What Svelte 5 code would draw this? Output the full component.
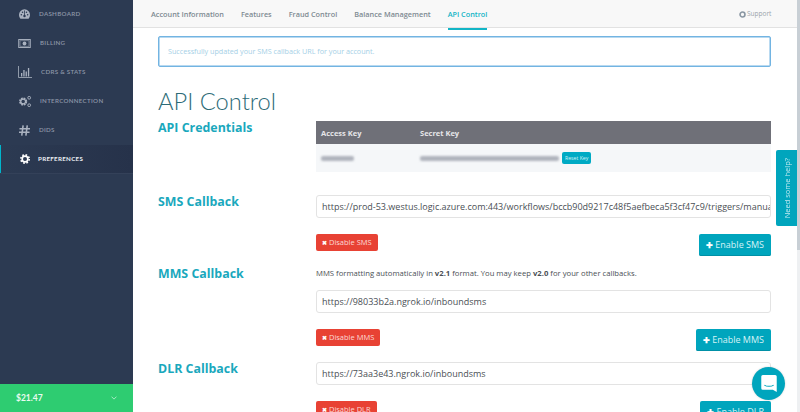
<script>
  const nav = [
    { label: 'DASHBOARD', icon: 'dash', pad: 39 },
    { label: 'BILLING', icon: 'bill', pad: 40 },
    { label: 'CDRS & STATS', icon: 'stats', pad: 41 },
    { label: 'INTERCONNECTION', icon: 'inter', pad: 40 },
    { label: 'DIDS', icon: 'hash', pad: 39 },
    { label: 'PREFERENCES', icon: 'gear', pad: 38, active: true }
  ];
  const tabs = ['Account Information', 'Features', 'Fraud Control', 'Balance Management', 'API Control'];
</script>

<div class="page">
  <aside class="side">
    <nav class="nav">
      {#each nav as n}
        <div class="item" class:active={n.active}>
          <span class="ico">
            {#if n.icon === 'dash'}
              <svg viewBox="0 0 14 12" width="11" height="10"><path fill="#aab2c0" d="M7 0a7 7 0 0 0-7 7c0 2 .7 3.600 1.800 5h10.400A7 7 0 0 0 14 7a7 7 0 0 0-7-7z"/><g fill="#2c3a52"><circle cx="3" cy="7" r="1"/><circle cx="4.500" cy="3.700" r="1"/><circle cx="9.500" cy="3.700" r="1"/><circle cx="11" cy="7" r="1"/><circle cx="7" cy="8.500" r="1.600"/><rect x="6.500" y="1.500" width="1" height="6"/></g></svg>
            {:else if n.icon === 'bill'}
              <svg viewBox="0 0 14 10" width="13" height="9"><rect x=".6" y=".6" width="12.800" height="8.800" fill="none" stroke="#aab2c0" stroke-width="1.100"/><rect x="2" y="2" width="10" height="6" fill="none" stroke="#aab2c0" stroke-width=".6"/><circle cx="7" cy="5" r="2.100" fill="#aab2c0"/></svg>
            {:else if n.icon === 'stats'}
              <svg viewBox="0 0 14 12" width="14" height="12"><path fill="none" stroke="#aab2c0" stroke-width=".8" d="M.5 0v11.500H14"/><g fill="#aab2c0"><rect x="3" y="7" width="1.300" height="3.500"/><rect x="5.300" y="4" width="1.300" height="6.500"/><rect x="7.600" y="5.500" width="1.300" height="5"/><rect x="9.900" y="2" width="1.300" height="8.500"/></g></svg>
            {:else if n.icon === 'inter'}
              <svg viewBox="0 0 15 14" width="14" height="13"><circle cx="5.500" cy="7" r="3.300" fill="none" stroke="#aab2c0" stroke-width="2.200" stroke-dasharray="1.800 .8"/><circle cx="5.500" cy="7" r="2.600" fill="none" stroke="#aab2c0" stroke-width="1.300"/><circle cx="12" cy="3" r="1.500" fill="none" stroke="#aab2c0"/><circle cx="12" cy="11" r="1.500" fill="none" stroke="#aab2c0"/></svg>
            {:else if n.icon === 'hash'}
              <svg viewBox="0 0 12 12" width="11" height="11"><path fill="none" stroke="#aab2c0" stroke-width="1.700" d="M4.500 .5 3 11.500M9 .5 7.500 11.500M.5 4H12M0 8h11.500"/></svg>
            {:else}
              <svg viewBox="0 0 12 12" width="10" height="10"><circle cx="6" cy="6" r="3.400" fill="none" stroke="#fff" stroke-width="2"/><circle cx="6" cy="6" r="5" fill="none" stroke="#fff" stroke-width="2" stroke-dasharray="2 1.930"/></svg>
            {/if}
          </span>
          <span class="lbl" style="left:{n.pad}px">{n.label}</span>
        </div>
      {/each}
    </nav>
    <div class="balance">
      <span>$21.47</span>
      <svg viewBox="0 0 8 5" width="6" height="4"><path d="M.7.7 4 4 7.300.7" fill="none" stroke="#cdf3dc" stroke-width="1"/></svg>
    </div>
  </aside>

  <main class="main">
    <header class="tabs">
      {#each tabs as t, i}
        <span class="tab" class:on={i === 4}>{t}</span>
      {/each}
      <span class="support">
        <svg viewBox="0 0 12 12" width="7" height="7"><circle cx="6" cy="6" r="4.200" fill="none" stroke="#8a97a3" stroke-width="2.800"/></svg>
        Support
      </span>
    </header>

    <div class="content">
      <div class="alert">Successfully updated your SMS callback URL for your account.</div>
      <h1>API Control</h1>

      <section class="row creds">
        <h2>API Credentials</h2>
        <div class="col">
          <div class="thead"><span class="c1">Access Key</span><span>Secret Key</span></div>
          <div class="tbody">
            <span class="c1"><i class="blur b1"></i></span>
            <i class="blur b2"></i>
            <span class="reset">Reset Key</span>
          </div>
        </div>
      </section>

      <section class="row sms">
        <h2>SMS Callback</h2>
        <div class="col">
          <div class="input">https://prod-53.westus.logic.azure.com:443/workflows/bccb90d9217c48f5aefbeca5f3cf47c9/triggers/manual/paths/invoke</div>
          <div class="btns">
            <span class="btn red"><b>✖</b> Disable SMS</span>
            <span class="btn teal"><b>✚</b> Enable SMS</span>
          </div>
        </div>
      </section>

      <section class="row mms">
        <h2>MMS Callback</h2>
        <div class="col">
          <p class="note">MMS formatting automatically in <b>v2.1</b> format. You may keep <b>v2.0</b> for your other callbacks.</p>
          <div class="input">https://98033b2a.ngrok.io/inboundsms</div>
          <div class="btns">
            <span class="btn red"><b>✖</b> Disable MMS</span>
            <span class="btn teal"><b>✚</b> Enable MMS</span>
          </div>
        </div>
      </section>

      <section class="row dlr">
        <h2>DLR Callback</h2>
        <div class="col">
          <div class="input">https://73aa3e43.ngrok.io/inboundsms</div>
          <div class="btns">
            <span class="btn red"><b>✖</b> Disable DLR</span>
            <span class="btn teal"><b>✚</b> Enable DLR</span>
          </div>
        </div>
      </section>
    </div>
  </main>

  <div class="scroll"></div>
  <div class="help"><span>Need some help?</span></div>
  <div class="chat">
    <svg viewBox="0 0 20 22" width="20" height="22"><path fill="#fff" d="M2 0h16a2 2 0 0 1 2 2v20l-5-3H2a2 2 0 0 1-2-2V2a2 2 0 0 1 2-2z"/><path d="M4 13c3 2.200 9 2.200 12 0" fill="none" stroke="#00a5bd" stroke-width="1.300"/></svg>
  </div>
</div>

<style>
  :global(body) { margin: 0; }
  .page { position: relative; display: flex; width: 800px; height: 412px; overflow: hidden; background: #fff; font-family: "Open Sans", sans-serif; }
  .side { width: 133px; flex: none; display: flex; flex-direction: column; justify-content: space-between; background: #2c3a52; }
  .nav { display: flex; flex-direction: column; }
  .item { position: relative; height: 29px; flex: none; }
  .item.active { background: linear-gradient(90deg, #2c3a52, #26324a); border-bottom: 1px solid #344159; box-sizing: border-box; }
  .item.active::before { content: ""; position: absolute; left: 0; top: 0; width: 1px; height: 28px; background: #00b5cc; }
  .ico { position: absolute; left: 17px; top: 0; width: 15px; height: 28px; display: flex; align-items: center; justify-content: center; }
  .lbl { position: absolute; top: 0; font: 600 6.200px/28px Lato, sans-serif; letter-spacing: .3px; color: #8d96a8; white-space: nowrap; }
  .active .lbl { color: #eef1f5; font-weight: 700; }
  .balance { height: 28px; background: #2ecc71; display: flex; align-items: center; justify-content: space-between; padding: 0 16px; color: #e9fbf0; font: 700 8.500px Lato, sans-serif; }
  .main { flex: 1; min-width: 0; }
  .tabs { position: relative; display: flex; gap: 17px; height: 28px; box-sizing: border-box; padding-left: 18px; background: #f8f8f8; border-bottom: 1px solid #e2e2e2; font-size: 7.300px; font-weight: 600; color: #7e8a92; line-height: 28px; white-space: nowrap; }
  .tab { height: 28px; }
  .tab.on { color: #12b5c6; border-bottom: 2px solid #12b5c6; }
  .support { position: absolute; left: 606px; top: 0; display: flex; align-items: center; gap: 1px; font-size: 6.500px; font-weight: 400; color: #9aa3aa; }
  .content { padding: 8px 29px 0 25px; }
  .alert { height: 31px; box-sizing: border-box; border: 1px solid #72b4e2; border-radius: 2px; box-shadow: inset 0 0 0 .5px #72b4e2; padding-left: 9px; font-size: 7.200px; line-height: 29px; color: #a5cfe6; }
  h1 { margin: 18px 0 0; font: 300 23.700px/32px Lato, sans-serif; color: #2d6b77; }
  .row { display: flex; }
  h2 { width: 158px; flex: none; margin: -2px 0 0; font: 700 12.400px/18px "Open Sans", sans-serif; color: #1aa8bd; }
  .col { flex: 1; min-width: 0; }
  .creds { margin-top: 4px; }
  .thead { height: 23px; background: #6f7078; display: flex; align-items: center; color: #e6e6e8; font-size: 7.500px; font-weight: 700; }
  .c1 { width: 104px; padding-left: 5px; flex: none; box-sizing: border-box; }
  .tbody { height: 28px; background: #f5f7f9; display: flex; align-items: center; }
  .blur { display: block; height: 5px; background: #b0b4bd; filter: blur(1.300px); border-radius: 2px; }
  .b1 { width: 33px; }
  .b2 { width: 139px; margin-right: 3px; }
  .reset { background: #00aac4; color: #d6f3f7; border-radius: 2px; font-size: 5.200px; line-height: 12px; padding: 0 3px; }
  .sms { margin-top: 23px; }
  .input { height: 23px; box-sizing: border-box; border: 1px solid #e3e3e3; border-radius: 3px; padding: 0 5px; font: 400 9px/21px "Open Sans", sans-serif; color: #4a4f55; white-space: nowrap; overflow: hidden; }
  .btns { display: flex; justify-content: space-between; align-items: flex-start; margin-top: 16px; }
  .btn { display: inline-block; white-space: nowrap; }
  .btn b { font-weight: 700; }
  .red { height: 17px; background: #e84234; color: #fbd9d5; border-radius: 2px; padding: 0 6px; font-size: 7.500px; line-height: 17px; }
  .red b { color: #fff; font-size: 6px; }
  .teal { height: 22px; background: #00a5bd; box-shadow: inset 0 -1px 0 #0090a6; color: #d6f3f7; border-radius: 2px; padding: 0 7px; font-size: 9px; line-height: 21px; }
  .teal b { color: #fff; font-size: 8px; }
  .mms { margin-top: 9px; }
  .mms h2 { margin-top: 0; }
  .note { margin: 0 0 9px; font-size: 7.700px; line-height: 16px; color: #4a4f55; }
  .dlr { margin-top: 11px; }
  .scroll { position: absolute; right: 0; top: 0; width: 3px; height: 412px; background: #eef0f2; }
  .scroll::after { content: ""; position: absolute; left: 0; top: 0; width: 3px; height: 250px; background: #c8cfd5; }
  .help { position: absolute; left: 776px; top: 150px; width: 21px; height: 76px; background: #00a5bd; border-radius: 2px 0 0 2px; display: flex; align-items: center; justify-content: center; }
  .help span { writing-mode: vertical-rl; transform: rotate(180deg); color: #bfeaf1; font-size: 7.500px; white-space: nowrap; }
  .chat { position: absolute; left: 752px; top: 367px; width: 33px; height: 33px; border-radius: 50%; background: #00a5bd; display: flex; align-items: center; justify-content: center; box-shadow: 0 0 2px rgba(0,0,0,.2); }
  .chat svg { width: 16px; height: 17px; }
</style>
